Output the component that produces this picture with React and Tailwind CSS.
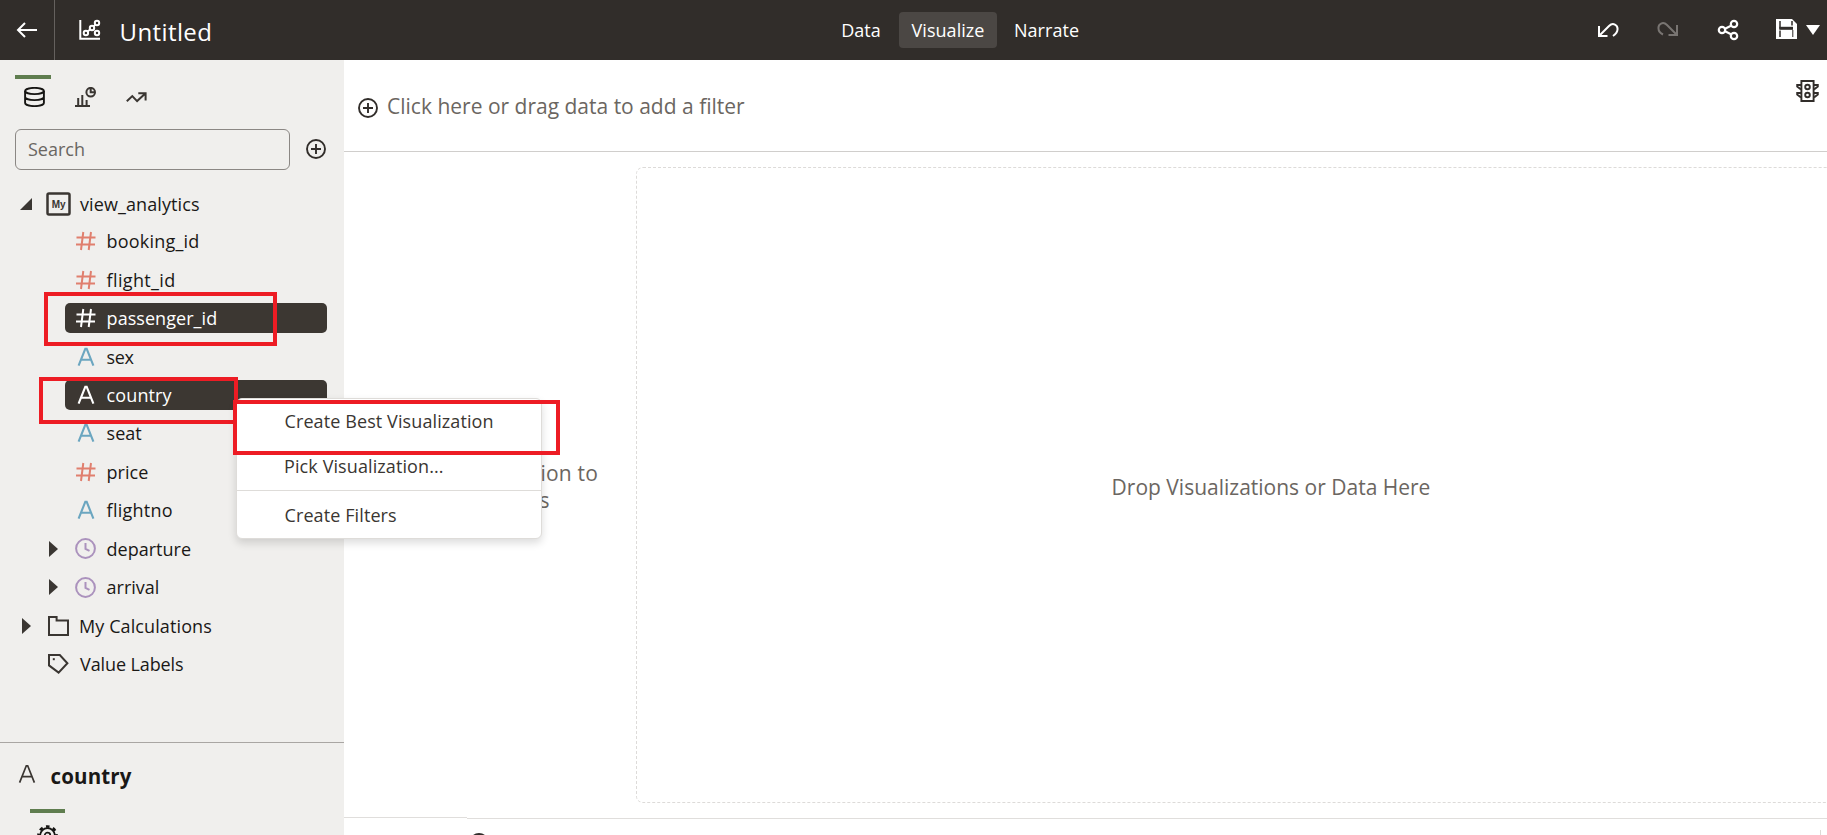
const HashIcon = () => (
  <svg width="20" height="20" viewBox="0 0 20 20" fill="none" stroke="currentColor" strokeWidth="2">
    <path d="M7.3 1 5 19M15 1l-2.3 18M.5 6.5h19M0 13.5h19" />
  </svg>
);

const LetterIcon = ({ weight = 2.1 }) => (
  <svg width="20" height="20" viewBox="0 0 20 20" fill="none" stroke="currentColor" strokeWidth={weight}>
    <path d="M2.6 18.6 9.3 1.8h1.4l6.7 16.8M5 12.7h10" />
  </svg>
);

const ClockIcon = () => (
  <svg width="21" height="21" viewBox="0 0 21 21" fill="none" stroke="currentColor" strokeWidth="2">
    <circle cx="10.5" cy="10.5" r="9.4" />
    <path d="M10.5 5v5.8l4 2" />
  </svg>
);

const FolderIcon = () => (
  <svg width="21" height="20" viewBox="0 0 21 20" fill="none" stroke="#3a3632" strokeWidth="2">
    <path d="M1 19V1h7.6v3.4H20V19z" />
  </svg>
);

const TagIcon = () => (
  <svg width="21" height="20" viewBox="0 0 21 20" fill="none" stroke="#3a3632" strokeWidth="2">
    <path d="M1 1h10.8l7.6 8.2-8.8 9.4L1 11.4z" />
    <path d="M4.8 5.2h2" />
  </svg>
);

const MyIcon = () => (
  <svg width="25" height="24" viewBox="0 0 25 24">
    <rect x="1.5" y="1.5" width="22" height="21" rx="1.5" fill="none" stroke="#3a3632" strokeWidth="2.5" />
    <text x="12.6" y="15.6" textAnchor="middle" fontFamily="Liberation Sans, sans-serif" fontWeight="700" fontSize="10" fill="#3a3632">My</text>
  </svg>
);

const PlusCircle = () => (
  <svg width="20" height="20" viewBox="0 0 20 20" fill="none" stroke="#312d2a" strokeWidth="1.9">
    <circle cx="10" cy="10" r="9" />
    <path d="M10 5v10M5 10h10" />
  </svg>
);

const Collapsed = () => (
  <svg width="9" height="16" viewBox="0 0 9 16" fill="#3a3632"><path d="M0 0v16l9-8z" /></svg>
);

const Expanded = () => (
  <svg width="13" height="12" viewBox="0 0 13 12" fill="#3a3632"><path d="M12 0v12H0z" /></svg>
);

const fields = [
  ["booking_id", "num", "tracking-[0.2px]"],
  ["flight_id", "num", "tracking-[0.35px]"],
  ["passenger_id", "num", "tracking-[0.05px]", true],
  ["sex", "text", "tracking-[-0.4px]"],
  ["country", "text", "tracking-[0.1px]", true],
  ["seat", "text", "tracking-[0px]"],
  ["price", "num", "tracking-[0px]"],
  ["flightno", "text", "tracking-[0.25px]"],
  ["departure", "date", "tracking-[0px]"],
  ["arrival", "date", "tracking-[0px]"],
];

const kinds = {
  num: { Icon: HashIcon, color: "text-[#e07f6e]" },
  text: { Icon: LetterIcon, color: "text-[#6ba6c0]" },
  date: { Icon: ClockIcon, color: "text-[#ab92bd]" },
};

function Field({ label, kind, tracking, selected }) {
  const { Icon, color } = kinds[kind];
  return (
    <li className="flex h-[38.45px] items-center">
      <span className="flex w-[65px] shrink-0 justify-end pr-[7px]">{kind === "date" && <Collapsed />}</span>
      <div className={`flex h-[30px] w-[262px] items-center rounded-[5px] ${selected ? "bg-[#3c3732] text-white" : ""}`}>
        <span className={`flex w-[41px] items-center justify-center ${selected ? "text-white" : color}`}><Icon /></span>
        <span className={`ml-[0.6px] ${tracking}`}>{label}</span>
      </div>
    </li>
  );
}

function TopBar() {
  return (
    <header className="grid h-[60px] shrink-0 grid-cols-[1fr_auto_1fr] items-center bg-[#312d2a] text-white">
      <div className="flex h-full items-center">
        <div className="flex h-full w-[55px] items-center border-r border-[#65615e] pl-4">
          <svg width="22" height="18" viewBox="0 0 22 18" fill="none" stroke="white" strokeWidth="2"><path d="M9 2 2 9l7 7M2 9h19" /></svg>
        </div>
        <svg className="ml-6" width="22" height="22" viewBox="0 0 22 22" fill="none" stroke="white" strokeWidth="2">
          <path d="M1.3 1v18.8H21" />
          <circle cx="6.9" cy="14" r="2.2" /><circle cx="13" cy="9" r="2.2" /><circle cx="18" cy="4" r="2.2" /><circle cx="18" cy="14" r="2.2" />
          <path d="m8.5 12.5 3-2.2M14.6 7.4l2-2" />
        </svg>
        <h1 className="ml-[18.5px] pt-[3px] text-[24px] leading-[34px] tracking-[0.4px]">Untitled</h1>
      </div>
      <nav className="ml-[93px] flex items-center text-[18px] tracking-[0.05px]">
        <span className="flex h-9 w-[62px] items-center justify-center">Data</span>
        <span className="ml-[7px] flex h-9 w-[98px] items-center justify-center rounded-[4px] bg-[#4b4744]">Visualize</span>
        <span className="ml-[6px] flex h-9 w-[87px] items-center justify-center">Narrate</span>
      </nav>
      <div className="flex h-full items-center justify-end pr-[7px]">
        <svg width="22" height="16" viewBox="0 0 22 16" fill="none" stroke="white" strokeWidth="2">
          <path d="M2 4v10h8.5M2 14 12 4c4-4 9-1 8.5 3.5 0 2.5-1.5 4.3-4.5 6.5" />
        </svg>
        <svg className="mb-[3px] ml-[38px]" width="22" height="16" viewBox="0 0 22 16" fill="none" stroke="#797572" strokeWidth="2">
          <path d="M20 4v10h-8.5M20 14 10 4C6 0 1 3 1.5 7.5 1.5 10 3 12 6 13.5" />
        </svg>
        <svg className="ml-[38px]" width="22" height="22" viewBox="0 0 22 22" fill="none" stroke="white" strokeWidth="2.2">
          <circle cx="5" cy="11" r="3.2" /><circle cx="17" cy="5" r="3.2" /><circle cx="17" cy="17" r="3.2" />
          <path d="m8 9.7 6-3M8 12.3l6 3" />
        </svg>
        <svg className="mb-[3px] ml-[37px]" width="21" height="20" viewBox="0 0 21 20">
          <path d="M0 0h16l5 5v15H0z" fill="white" />
          <path d="M4 2v7h12M16 2v4.500M4 18v-6.500" fill="none" stroke="#312d2a" strokeWidth="1.5" />
          <path d="M3.300 7.800H17v3H3.300z" fill="#312d2a" />
          <path d="M16.800 11v7" stroke="#312d2a" strokeWidth="1" />
        </svg>
        <svg className="ml-[9px]" width="14" height="10" viewBox="0 0 14 10" fill="white"><path d="M0 0h14L7 10z" /></svg>
      </div>
    </header>
  );
}

function Sidebar() {
  return (
    <aside className="flex w-[344px] shrink-0 flex-col bg-[#f0efed] text-[#1a1816]">
      <div className="flex h-[54px] pl-[15px] pt-[15px]">
        <div className="flex w-9 flex-col items-center border-t-4 border-[#5f7d4f] pl-[3px] pt-2">
          <svg width="21" height="20" viewBox="0 0 21 20" fill="none" stroke="#161513" strokeWidth="1.9">
            <ellipse cx="10.5" cy="4" rx="9.4" ry="3.1" />
            <path d="M1.1 4v12c0 1.7 4.2 3.1 9.4 3.1s9.4-1.4 9.4-3.1V4M1.1 10c0 1.7 4.2 3.1 9.4 3.1s9.4-1.4 9.4-3.1" />
          </svg>
        </div>
        <svg className="ml-6 mt-3" width="22" height="20" viewBox="0 0 22 20" fill="none" stroke="#3a3632" strokeWidth="2">
          <path d="M0 19h15M3.2 19v-8M7.3 19V8M11.6 19v-6" />
          <circle cx="15.7" cy="5.2" r="4.3" /><path d="M15.7 1v4.2H20" />
        </svg>
        <svg className="ml-[29px] mt-[17px]" width="21" height="11" viewBox="0 0 21 11" fill="none" stroke="#3a3632" strokeWidth="2">
          <path d="m.8 9.3 5.5-5.2 4.8 5L19.3 1.5M12.3 1.2h7.3v7.3" />
        </svg>
      </div>
      <div className="flex items-center pl-[15px] pt-[15px]">
        <div className="flex h-[41px] w-[275px] items-center rounded-[6px] border border-[#8b8784] pl-3 text-[18px] text-[#6a6662]">Search</div>
        <div className="-mt-0.5 ml-4"><PlusCircle /></div>
      </div>
      <ul className="mt-[15px] text-[18px] leading-[30px]">
        <li className="flex h-[37px] items-center">
          <span className="flex w-[46px] pl-5"><Expanded /></span>
          <MyIcon />
          <span className="ml-[9px] tracking-[0.1px]">view_analytics</span>
        </li>
        {fields.map(([label, kind, tracking, selected]) => (
          <Field key={label} label={label} kind={kind} tracking={tracking} selected={selected} />
        ))}
        <li className="flex h-[38.45px] items-center">
          <span className="flex w-12 pl-[22px]"><Collapsed /></span>
          <FolderIcon />
          <span className="ml-[10px] tracking-[0.1px]">My Calculations</span>
        </li>
        <li className="flex h-[38.45px] items-center pl-12">
          <TagIcon />
          <span className="ml-[11px] tracking-[-0.1px]">Value Labels</span>
        </li>
      </ul>
      <section className="mt-auto flex h-[93px] shrink-0 flex-col overflow-hidden border-t border-[#a9a6a3]">
        <div className="flex h-[66px] shrink-0 items-center pl-[17px]">
          <span className="-mt-1 text-[#3a3632]"><LetterIcon weight={1.7} /></span>
          <span className="ml-[13.5px] text-[20.5px] font-bold tracking-[0.15px]">country</span>
        </div>
        <div className="ml-[30px] h-1 w-[35px] shrink-0 bg-[#5f7d4f]" />
        <svg className="ml-[37px] mt-3 shrink-0" width="21" height="21" viewBox="0 0 21 21" fill="none" stroke="#161513">
          <circle cx="10.5" cy="10.5" r="9" strokeWidth="2.6" strokeDasharray="3.534 3.534" strokeDashoffset="1.767" />
          <circle cx="10.5" cy="10.5" r="7.4" strokeWidth="1.8" />
          <circle cx="10.5" cy="10.5" r="2.8" strokeWidth="1.7" />
        </svg>
      </section>
    </aside>
  );
}

function Canvas() {
  return (
    <main className="flex min-w-0 flex-1 flex-col bg-white text-[#6b6661]">
      <div className="flex h-[92px] shrink-0 justify-between border-b border-[#d0cecc]">
        <div className="flex items-center pl-[13.5px]">
          <span className="mt-[5px]"><PlusCircle /></span>
          <span className="ml-[9.5px] pt-0.5 text-[21px]">Click here or drag data to add a filter</span>
        </div>
        <svg className="mr-2 mt-5" width="23" height="22" viewBox="0 0 23 22" fill="none" stroke="#312d2a" strokeWidth="1.9">
          <path d="M5.4 1h12.2v20H5.4z" />
          <circle cx="11.5" cy="7" r="2.3" /><circle cx="11.5" cy="15" r="2.3" />
          <path d="M5 5H1.2v1.5L5 9.5M5 13H1.2v1.5L5 17.5M18 5h3.8v1.5L18 9.5M18 13h3.8v1.5L18 17.5" />
        </svg>
      </div>
      <div className="flex h-[665px] shrink-0 overflow-hidden">
        <div className="flex w-[292px] flex-col justify-center pr-[38px] text-right text-[21px] leading-[27px]">
          <p className="pt-[5px] tracking-[0.2px]">ion to</p>
          <p className="pr-[48.5px]">s</p>
        </div>
        <div className="-mr-2 mb-[14px] mt-[15px] flex flex-1 items-center justify-center rounded-[7px] border border-dashed border-[#dddbd9] pl-[71px] pt-[5px] text-[21px]">
          Drop Visualizations or Data Here
        </div>
      </div>
      <div className="flex flex-1">
        <div className="w-[123px] border-t border-[#e0dedc]" />
        <div className="mt-px flex flex-1 justify-between overflow-hidden border-t border-[#e0dedc]">
          <svg className="ml-[2px] mt-[14px] shrink-0" width="20" height="20" viewBox="0 0 20 20" fill="none" stroke="#312d2a" strokeWidth="1.9"><circle cx="10" cy="10" r="9" /></svg>
          <div className="mr-[6px] mt-[11px] w-px bg-[#dddad6]" />
        </div>
      </div>
    </main>
  );
}

export default function App() {
  return (
    <div className="relative flex h-[835px] w-[1827px] flex-col overflow-hidden font-['Open_Sans','Noto_Sans',sans-serif]">
      <TopBar />
      <div className="flex min-h-0 flex-1">
        <Sidebar />
        <Canvas />
      </div>
      <div className="absolute left-[44px] top-[292px] h-[54px] w-[233px] border-4 border-[#ed1c24]" />
      <div className="absolute left-[39px] top-[377px] h-[47px] w-[199px] border-4 border-[#ed1c24]" />
      <div className="absolute left-[236px] top-[398px] flex h-[141px] w-[306px] flex-col rounded-[6px] border border-[#dedcd9] bg-white text-[18px] leading-[30px] text-[#3a3632] shadow-[0_4px_8px_rgba(0,0,0,0.14)]">
        <span className="mt-[7px] pl-[47.5px] tracking-[0.1px]">Create Best Visualization</span>
        <span className="mt-[15px] pl-[47px] tracking-[0.1px]">Pick Visualization...</span>
        <span className="mt-[9px] h-px bg-[#dedcd9]" />
        <span className="mt-[9px] pl-[47.5px] tracking-[0.1px]">Create Filters</span>
      </div>
      <div className="absolute left-[233px] top-[400px] h-[55px] w-[327px] border-4 border-[#ed1c24]" />
    </div>
  );
}
